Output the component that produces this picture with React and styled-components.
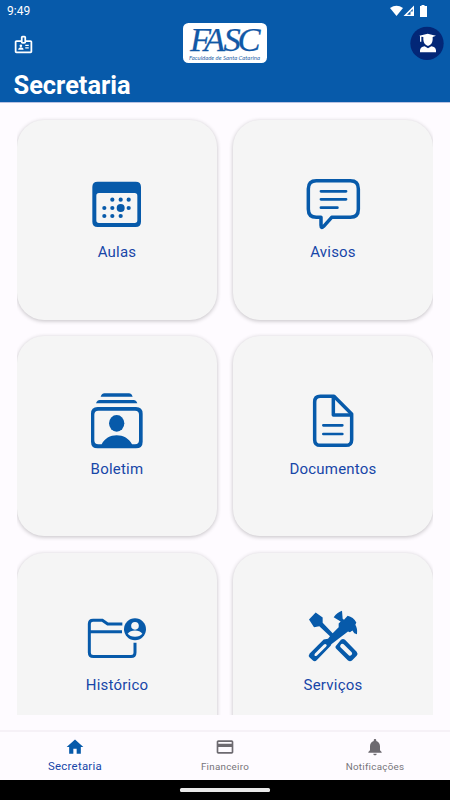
import React from "react";
import styled, { createGlobalStyle } from "styled-components";

const BLUE = "#075aaa";
const INK = "#1746a8";

const GlobalStyle = createGlobalStyle`
  * { box-sizing: border-box; }
  body { margin: 0; background: #fefbff; font-family: Roboto, sans-serif; }
`;

const Screen = styled.div`
  width: 450px;
  height: 800px;
  display: flex;
  flex-direction: column;
  overflow: hidden;
  background: #fefbff;
`;

const Header = styled.header`
  height: 102px;
  flex: none;
  display: flex;
  flex-direction: column;
  background: ${BLUE};
  color: #fff;
  box-shadow: 0 1px 0 #b9c2e2;
`;

const StatusBar = styled.div`
  height: 21px;
  flex: none;
  padding: 0 22px 0 7px;
  display: flex;
  align-items: center;
  justify-content: space-between;
  font-size: 12px;
`;

const StatusIcons = styled.svg`
  width: 40px;
  height: 14px;
`;

const AppBar = styled.div`
  height: 46px;
  flex: none;
  padding: 0 6px 0 13px;
  display: grid;
  grid-template-columns: 1fr 84px 1fr;
  align-items: center;
`;

const BadgeIcon = styled.svg`
  width: 21px;
  height: 21px;
`;

const Logo = styled.svg`
  width: 84px;
  height: 40px;
  transform: translate(-4px, -1px);
`;

const Avatar = styled.svg`
  width: 34px;
  height: 34px;
  justify-self: end;
  transform: translateY(-0.7px);
`;

const Title = styled.h1`
  margin: 2px 0 0 13.5px;
  font-size: 25.4px;
  font-weight: 700;
  line-height: 33px;
`;

const Content = styled.main`
  height: 613px;
  flex: none;
  margin: 0 17px;
  padding-top: 17.5px;
  overflow: hidden;
`;

const Grid = styled.div`
  display: grid;
  grid-template-columns: 200px 200px;
  grid-auto-rows: 200px;
  gap: 16.6px 16px;
`;

const Card = styled.div`
  display: flex;
  flex-direction: column;
  align-items: center;
  padding-top: 54.5px;
  border-radius: 27px;
  background: #f5f5f5;
  box-shadow: 0 1px 4px rgba(0, 0, 0, 0.24);
`;

const CardIcon = styled.svg`
  width: 60px;
  height: 60px;
  overflow: visible;
  color: ${BLUE};
`;

const CardLabel = styled.span`
  margin-top: 9.3px;
  font-size: 15px;
  line-height: 18px;
  letter-spacing: 0.22px;
  color: ${INK};
`;

const NavBar = styled.nav`
  margin-top: 15px;
  height: 50px;
  flex: none;
  display: grid;
  grid-template-columns: repeat(3, 1fr);
  border-top: 2px solid #f6f1f7;
`;

const NavItem = styled.div`
  display: flex;
  flex-direction: column;
  align-items: center;
  padding-top: 5px;
  color: ${(p) => (p.$active ? BLUE : "#6d6a70")};
`;

const NavIcon = styled.svg`
  width: 20px;
  height: 20px;
  fill: currentColor;
`;

const NavLabel = styled.span`
  margin-top: 3px;
  font-size: ${(p) => (p.$active ? "11.4px" : "9.8px")};
  line-height: 13px;
  letter-spacing: 0.27px;
  color: ${(p) => (p.$active ? INK : "#77747a")};
`;

const GestureBar = styled.div`
  flex: 1;
  display: flex;
  justify-content: center;
  padding-top: 8px;
  background: #000;
`;

const GestureHandle = styled.div`
  width: 90px;
  height: 4px;
  border-radius: 1.5px;
  background: #e9e9e9;
`;

const AulasIcon = () => (
  <CardIcon viewBox="36 27 180 180" fill="currentColor">
    <path fillRule="evenodd" d="M68 50H182Q198 50 198 66V170Q198 186 182 186H68Q52 186 52 170V66Q52 50 68 50ZM72 84Q64 84 64 92V166Q64 174 72 174H179Q187 174 187 166V92Q187 84 179 84Z" />
    {[[112, 104], [137, 104], [161, 104], [88, 129], [112, 129], [161, 129], [88, 153], [112, 153], [137, 153]].map(([x, y]) => (
      <circle key={`${x}-${y}`} cx={x} cy={y} r="6.3" />
    ))}
    <circle cx="137" cy="129" r="12" />
  </CardIcon>
);

const AvisosIcon = () => (
  <CardIcon viewBox="39 27 180 180" fill="none" stroke="currentColor" strokeWidth="10.5" strokeLinejoin="round" strokeLinecap="round">
    <path d="M79 47H181Q205 47 205 71V133Q205 157 181 157H125L101 184Q93 192 93 181V157H79Q55 157 55 133V71Q55 47 79 47Z" />
    <path strokeWidth="8.5" d="M93 79H168M93 103H168M93 128H142" />
  </CardIcon>
);

const BoletimIcon = () => (
  <CardIcon viewBox="36 32 180 180" fill="currentColor">
    <path d="M77 49Q81 39 88 39H162Q169 39 173 49ZM63 69Q67 59 74 59H176Q183 59 187 69Z" />
    <path fillRule="evenodd" d="M68 80H183Q203 80 203 100V184Q203 204 183 204H68Q48 204 48 184V100Q48 80 68 80ZM70 91Q58 91 58 103V180Q58 192 70 192H80C88 175 106 165 125 165S163 175 171 192H180Q192 192 192 180V103Q192 91 180 91Z" />
    <ellipse cx="125" cy="129" rx="23" ry="25" />
  </CardIcon>
);

const DocumentosIcon = () => (
  <CardIcon viewBox="69 32 180 180" fill="none" stroke="currentColor" strokeWidth="10.5" strokeLinejoin="round" strokeLinecap="round">
    <path d="M121 48H162L215 101V178Q215 195 198 195H121Q104 195 104 178V65Q104 48 121 48Z" />
    <path d="M160 50V104H213" />
    <path strokeWidth="8" d="M130 135H187M130 161H187" />
  </CardIcon>
);

const HistoricoIcon = () => (
  <CardIcon viewBox="36 22.5 180 180">
    <g fill="none" stroke="currentColor" strokeWidth="9">
      <path d="M142 73.5H98L82 62H54Q43 62 43 73V159Q43 171 55 171H168Q180 171 180 159V130" />
      <path d="M43 97H141" />
    </g>
    <circle cx="180" cy="89" r="33" fill="currentColor" />
    <circle cx="180" cy="79" r="11.5" fill="#f5f5f5" />
    <path fill="#f5f5f5" d="M158 103C163 95 171 93 180 93S197 95 202 103C197 109 190 112 180 112S163 109 158 103Z" />
  </CardIcon>
);

const ServicosIcon = () => (
  <CardIcon viewBox="39 22.5 180 180" fill="currentColor">
    <path d="M57 60L77 39L98 54V70L128 101L146 83V72L152 66L131 53Q143 38 156 34L158 58L162 61L173 49Q190 53 199 69L196 76Q203 87 201 104L193 101L187 93L180 98L174 96L124 134L122 139L80 182Q74 188 68 182L59 174Q54 168 59 162L101 120L114 118L120 110L88 80L72 83Z" />
    <path fill="#f5f5f5" d="M75 162L101 136Q105 132 109 135Q112 138 108 142L81 168Q77 171 74 169Q72 166 75 162Z" />
    <path fillRule="evenodd" d="M138 139L153 121Q159 116 165 121L200 157Q205 163 200 169L186 183Q180 188 174 183L138 147Q134 143 138 139ZM151 137Q149 142 153 145L177 168Q181 170 185 166Q188 162 185 158L161 134Q155 131 151 137Z" />
  </CardIcon>
);

const CARDS = [
  { label: "Aulas", Icon: AulasIcon },
  { label: "Avisos", Icon: AvisosIcon },
  { label: "Boletim", Icon: BoletimIcon },
  { label: "Documentos", Icon: DocumentosIcon },
  { label: "Histórico", Icon: HistoricoIcon },
  { label: "Serviços", Icon: ServicosIcon },
];

const TABS = [
  { label: "Secretaria", active: true, path: "M10 20v-6h4v6h5v-8h3L12 3 2 12h3v8z" },
  { label: "Financeiro", path: "M20 4H4c-1.11 0-1.99.89-1.99 2L2 18c0 1.11.89 2 2 2h16c1.11 0 2-.89 2-2V6c0-1.11-.89-2-2-2zm0 14H4v-6h16v6zm0-10H4V6h16v2z" },
  { label: "Notificações", path: "M12 22c1.1 0 2-.9 2-2h-4c0 1.1.89 2 2 2zm6-6v-5c0-3.07-1.64-5.64-4.5-6.32V4c0-.83-.67-1.5-1.5-1.5s-1.5.67-1.5 1.5v.68C7.63 5.36 6 7.92 6 11v5l-2 2v1h16v-1l-2-2z" },
];

export default function App() {
  return (
    <Screen>
      <GlobalStyle />
      <Header>
        <StatusBar>
          <span>9:49</span>
          <StatusIcons viewBox="388 3 40 14" fill="#fff">
            <path d="M390 7Q396.5 2.5 403 7L396.5 15Z" />
            <path fillRule="evenodd" d="M414 4.5V15H403.5ZM412.7 8L407 13.8H410.5V10.5H412.7Z" />
            <path d="M421.5 4h3v1h2.5v11h-7V5h1.5z" />
          </StatusIcons>
        </StatusBar>
        <AppBar>
          <BadgeIcon viewBox="0 0 24 24" fill="#fff">
            <path fillRule="evenodd" d="M20 7h-5V4c0-1.1-.9-2-2-2h-2c-1.1 0-2 .9-2 2v3H4c-1.1 0-2 .9-2 2v11c0 1.1.9 2 2 2h16c1.1 0 2-.9 2-2V9c0-1.1-.9-2-2-2zM11 4h2v5h-2V4zM20 20H4V9h5c0 1.1.9 2 2 2h2c1.1 0 2-.9 2-2h5v11z" />
            <circle cx="9" cy="13.5" r="1.5" />
            <path d="M6 18v-.57c0-.81.48-1.53 1.22-1.85a4.5 4.5 0 0 1 3.56 0c.74.32 1.22 1.04 1.22 1.85V18zM14 15.2h4v1.5h-4zM14 12.2h4v1.5h-4z" />
          </BadgeIcon>
          <Logo viewBox="0 0 84 40">
            <rect width="84" height="40" rx="5.5" fill="#fff" />
            <text x="7 21 40.5 54.5" y="27.8" fontSize="34.5" fontStyle="italic" fontFamily="Liberation Serif, serif" fill="#1158a6" stroke="#1158a6" strokeWidth="0.25">FASC</text>
            <text x="6" y="37.3" fontSize="5.6" fontStyle="italic" fontFamily="Lato, sans-serif" fill="#2a65a8" textLength="71" lengthAdjust="spacingAndGlyphs">Faculdade de Santa Catarina</text>
          </Logo>
          <Avatar viewBox="119 79 102 102">
            <circle cx="170" cy="130" r="50" fill="#032777" />
            <g fill="#fff">
              <path d="M147 107L172 101L197 107L187 111V119Q186 133 173 138Q160 133 159 119V111L153 110V125H149V109Z" />
              <path d="M149 157V151Q150 141 163 139L173 145L183 139Q196 141 197 151V157Z" />
            </g>
          </Avatar>
        </AppBar>
        <Title>Secretaria</Title>
      </Header>
      <Content>
        <Grid>
          {CARDS.map(({ label, Icon }) => (
            <Card key={label}>
              <Icon />
              <CardLabel>{label}</CardLabel>
            </Card>
          ))}
        </Grid>
      </Content>
      <NavBar>
        {TABS.map(({ label, active, path }) => (
          <NavItem key={label} $active={active}>
            <NavIcon viewBox="0 0 24 24"><path d={path} /></NavIcon>
            <NavLabel $active={active}>{label}</NavLabel>
          </NavItem>
        ))}
      </NavBar>
      <GestureBar><GestureHandle /></GestureBar>
    </Screen>
  );
}
